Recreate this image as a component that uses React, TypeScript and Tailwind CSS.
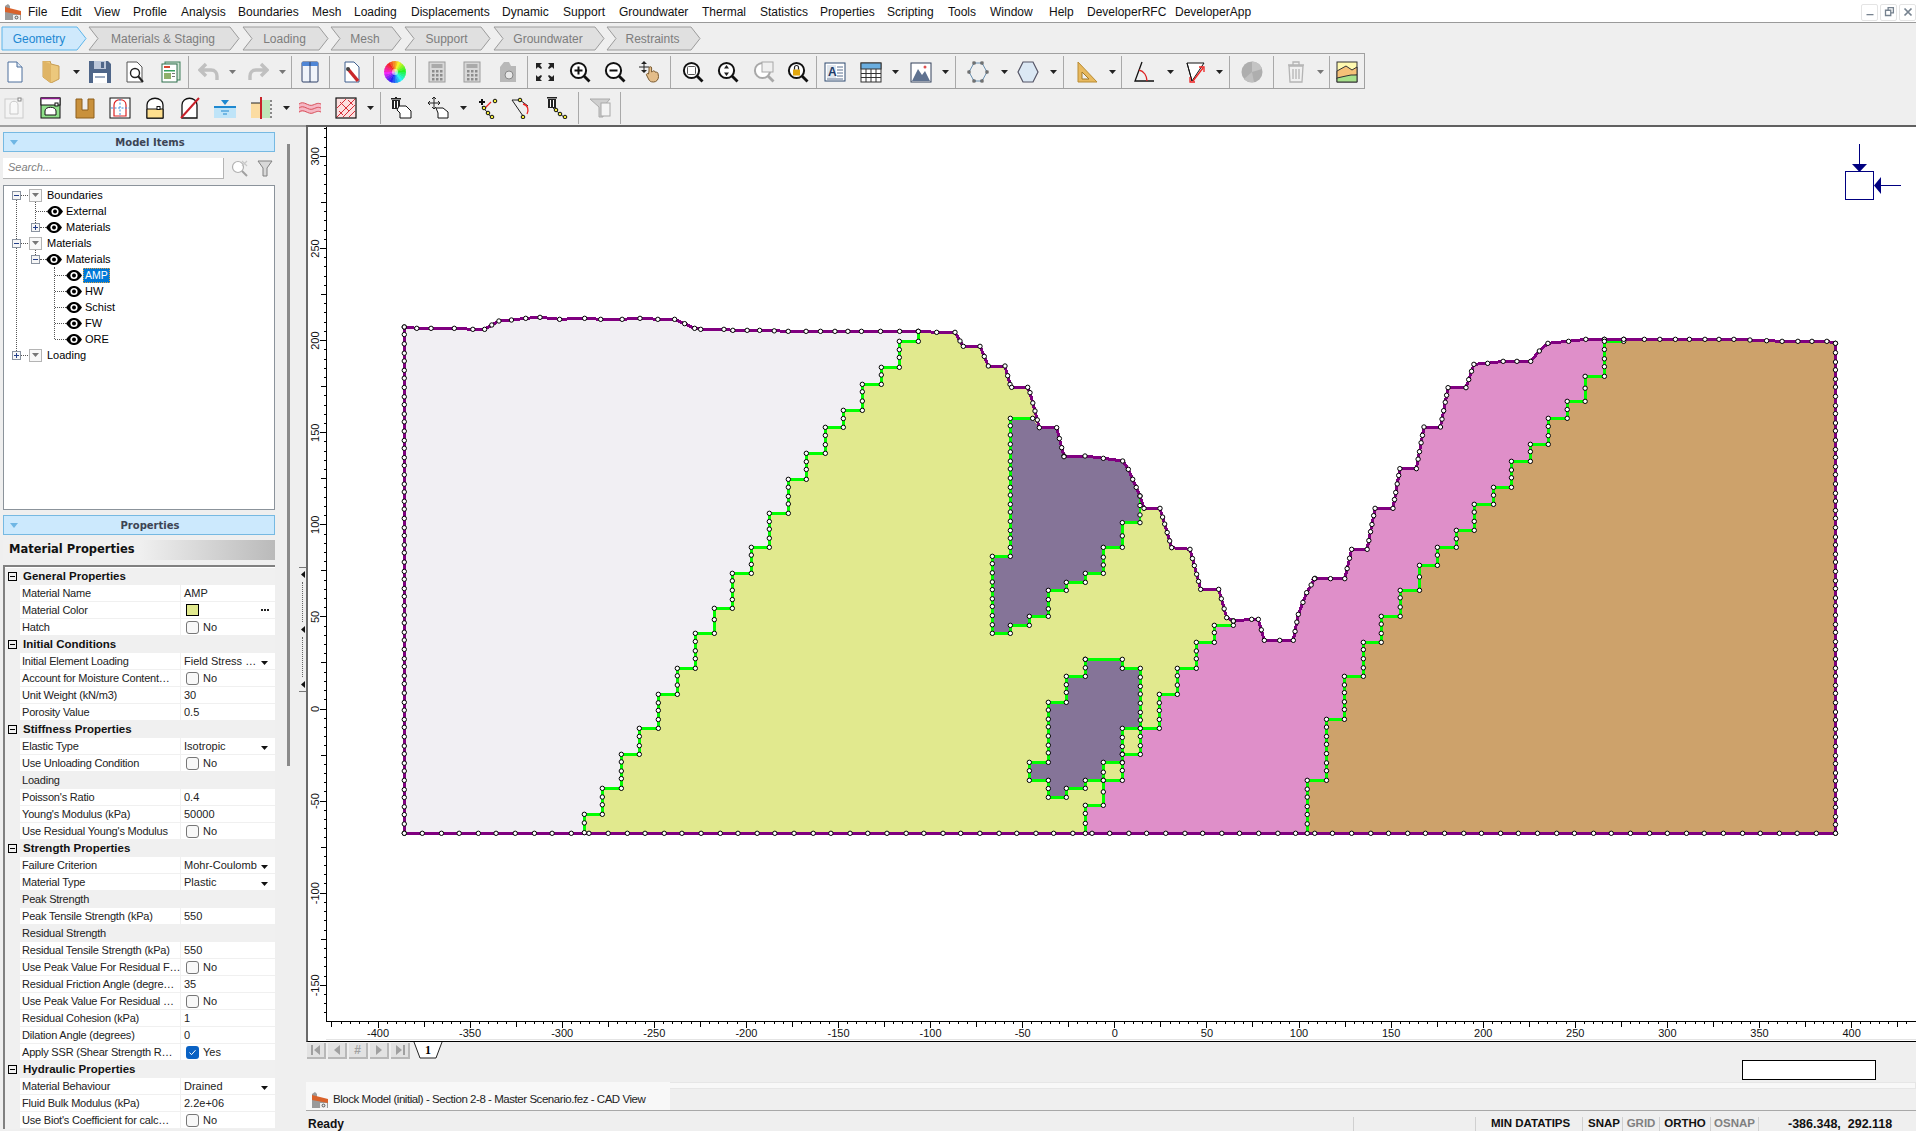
import React from "react";

type P = [number, number];
const z9 = (a: number[][]): P[] => a.map(([x, y]) => [390 + x / 2.8, 310 + y / 3]);
const z10 = (a: number[][]): P[] => a.map(([x, y]) => [940 + x / 3, 400 + y / 3]);
const z11 = (a: number[][]): P[] => a.map(([x, y]) => [1300 + x / 2.904, 325 + y / 3]);
const z12 = (a: number[][]): P[] => a.map(([x, y]) => [570 + x / 3, 320 + y / 3]);
const str = (a: P[]) => a.map(([x, y]) => `${x.toFixed(1)},${y.toFixed(1)}`).join(" ");

const sA = z9([[40,48],[75,52],[115,52],[180,52],[232,55],[265,55],[285,42],[305,30],[340,27],[380,22],[420,19],[475,25],[545,22],[590,25],[650,25],[700,22],[750,25],[797,25],[825,38],[853,52],[870,55],[935,55],[960,58],[1035,58],[1115,61],[1165,61],[1320,61],[1427,61]]);
const sB = z12([[1045,31],[1100,34],[1155,34],[1170,60],[1180,76],[1230,76],[1255,135],[1305,135],[1320,190],[1325,199],[1373,199],[1380,215],[1395,270],[1408,320],[1460,320],[1475,380],[1482,405]]);
const sC = z10([[372,167],[435,165],[490,172],[548,180],[565,205],[600,285],[612,322],[660,322],[695,440],[750,445],[782,565],[836,565],[860,650],[880,660]]);
const sD = z10([[880,660],[935,655],[955,655],[973,718],[1060,718],[1075,640],[1100,575],[1125,532]]);
const sE = z11([[42,758],[130,758],[150,670],[195,670],[218,547],[270,547],[290,428],[338,428],[360,303],[408,303],[430,185],[482,185],[505,115],[545,112],[590,106],[670,106],[695,75],[720,52],[780,46],[830,40],[884,40]]);
const sF = z11([[884,40],[940,40],[1000,40],[1260,40],[1400,46],[1530,46],[1555,52]]);
const bR: P = [1835.5, 832.3];
const bL: P = [404.3, 832.3];
const surface = [...sA, ...sB, ...sC, ...sD, ...sE, ...sF];
const outer: P[] = [...surface, bR, bL];

const i1 = z12([[43,1535],[43,1480],[97,1480],[97,1402],[154,1402],[154,1300],[208,1300],[208,1222],[265,1222],[265,1120],[322,1120],[322,1042],[376,1042],[376,937],[433,937],[433,862],[487,862],[487,757],[544,757],[544,679],[598,679],[598,577],[655,577],[655,475],[709,475],[709,397],[766,397],[766,319],[820,319],[820,268],[877,268],[877,190],[934,190],[934,139],[988,139],[988,61],[1045,61],[1045,31]]);
const grayPoly: P[] = [...sA, ...[...i1].reverse(), bL];
const ore1Line = z10([[600,285],[600,365],[547,365],[547,439],[490,439],[490,517],[436,517],[436,544],[379,544],[379,568],[325,568],[325,646],[268,646],[268,673],[211,673],[211,697],[157,697],[157,466],[211,466],[211,52],[278,52]]);
const ore1: P[] = [...ore1Line, ...z10([[295,78],[350,78],[372,167],[435,165],[490,172],[548,180],[565,205]])];
const ore2 = z10([[436,775],[547,775],[547,802],[601,802],[601,982],[547,982],[547,1084],[490,1084],[490,1138],[436,1138],[436,1162],[379,1162],[379,1189],[325,1189],[325,1138],[268,1138],[268,1084],[325,1084],[325,904],[379,904],[379,826],[436,826],[436,775]]);
const pinkLine = z10([[436,1297],[436,1213],[490,1213],[490,1138],[547,1138],[547,1060],[601,1060],[601,982],[658,982],[658,880],[712,880],[712,802],[769,802],[769,724],[823,724],[823,673],[880,673],[880,660]]);
const brownLine = z11([[21,1522],[21,1363],[77,1363],[77,1180],[129,1180],[129,1051],[184,1051],[184,949],[236,949],[236,871],[291,871],[291,793],[347,793],[347,718],[399,718],[399,664],[454,664],[454,613],[506,613],[506,535],[562,535],[562,484],[614,484],[614,406],[669,406],[669,355],[721,355],[721,277],[776,277],[776,226],[828,226],[828,151],[884,151],[884,46],[940,46],[940,40]]);
const pinkPoly: P[] = [...pinkLine, ...sD, ...sE, ...[...brownLine].reverse().slice(2)];
const brownPoly: P[] = [...brownLine, ...sF.slice(2), bR];

function dots(pts: P[], stepH: number, stepV: number): P[] {
  const out: P[] = [];
  for (let i = 0; i < pts.length; i++) {
    out.push(pts[i]);
    if (i === pts.length - 1) break;
    const [x0, y0] = pts[i], [x1, y1] = pts[i + 1];
    const dx = x1 - x0, dy = y1 - y0;
    const len = Math.hypot(dx, dy);
    const step = Math.abs(dx) > Math.abs(dy) ? stepH : stepV;
    if (step <= 0) continue;
    const n = Math.floor(len / step);
    for (let k = 1; k < n; k++) {
      const j = ((k * 7 + i * 3) % 5) * 0.3;
      out.push([x0 + (dx * k) / n + (dx / len) * j, y0 + (dy * k) / n + (dy / len) * j]);
    }
  }
  return out;
}
const allDots: P[] = [
  ...dots(surface, 13, 8),
  ...dots([surface[surface.length - 1], bR], 18, 8.6),
  ...dots([bR, bL], 18.4, 9),
  ...dots([bL, surface[0]], 18, 8.6),
  ...dots(i1, 0, 8.4),
  ...dots(ore1Line, 0, 8.4),
  ...dots(ore2, 0, 8.4),
  ...dots(pinkLine, 0, 8.4),
  ...dots(brownLine, 0, 8.4),
];

const fx = (u: number) => 1114.8 + 1.842 * u;
const fy = (u: number) => 708 - 1.842 * u;

function Canvas() {
  const xt: number[] = [], yt: number[] = [];
  for (let u = -425; u <= 435; u += 5) xt.push(u);
  for (let u = -165; u <= 315; u += 5) yt.push(u);
  const tick = (u: number) => (u % 50 === 0 ? 6 : u % 25 === 0 ? 5 : 2);
  return (
    <div className="h-[915px] w-[1610px] border-l-2 border-[#6a6a6a] border-b border-b-black bg-white">
      <svg viewBox="308 126 1608 914" className="block h-[914px] w-[1608px]">
        <g shapeRendering="crispEdges">
          <polygon points={str(outer)} fill="#e1e98e" />
          <polygon points={str(grayPoly)} fill="#f1eff3" />
          <polygon points={str(pinkPoly)} fill="#df8fc9" />
          <polygon points={str(brownPoly)} fill="#cda26b" />
          <polygon points={str(ore1)} fill="#857498" />
          <polygon points={str(ore2)} fill="#857498" />
          {[i1, ore1Line, ore2, pinkLine, brownLine].map((l, i) => (
            <polyline key={i} points={str(l)} fill="none" stroke="#00ff00" strokeWidth="2.8" />
          ))}
        </g>
        <polygon points={str(outer)} fill="none" stroke="#800080" strokeWidth="3" shapeRendering="crispEdges" />
        {allDots.map(([x, y], i) => (
          <circle key={i} cx={x} cy={y} r="2.200" fill="#fff" stroke="#000" strokeWidth="1" />
        ))}
        <g shapeRendering="crispEdges" stroke="#000" strokeWidth="1">
          <line x1="326.5" y1="126" x2="326.5" y2="1021" />
          <line x1="326" y1="1020.5" x2="1916" y2="1020.5" />
          <line x1="326" y1="1038.5" x2="1916" y2="1038.5" stroke="#e4e4e4" />
          {xt.map((u) => (
            <line key={u} x1={fx(u)} y1="1021" x2={fx(u)} y2={1021 + tick(u)} />
          ))}
          {yt.map((u) => (
            <line key={u} x1={326 - tick(u)} y1={fy(u)} x2="326" y2={fy(u)} />
          ))}
        </g>
        {[-400,-350,-300,-250,-200,-150,-100,-50,0,50,100,150,200,250,300,350,400].map((u) => (
          <text key={u} x={fx(u)} y="1036" fontSize="11" textAnchor="middle" fontFamily="'Liberation Sans',sans-serif" fill="#111">{u}</text>
        ))}
        {[300,250,200,150,100,50,0,-50,-100,-150].map((u) => (
          <text key={u} x="319" y={fy(u)} fontSize="11" textAnchor="middle" transform={`rotate(-90 319 ${fy(u)})`} fontFamily="'Liberation Sans',sans-serif" fill="#111">{u}</text>
        ))}
        <g stroke="#000080" strokeWidth="1.4" fill="none" shapeRendering="crispEdges">
          <rect x="1845.5" y="170.5" width="28" height="28" />
          <line x1="1859.5" y1="143" x2="1859.5" y2="165" />
          <line x1="1880" y1="184.5" x2="1901" y2="184.5" />
        </g>
        <polygon points="1852,163 1867,163 1859.5,171" fill="#000080" />
        <polygon points="1874,184.5 1881,176 1881,193" fill="#000080" />
      </svg>
    </div>
  );
}

function I({ c, children }: { c: string; children: React.ReactNode }) {
  return <svg viewBox="0 0 22 22" className={`h-[22px] w-[22px] shrink-0 ${c}`}>{children}</svg>;
}
function Arr({ c, gray }: { c: string; gray?: boolean }) {
  return (
    <svg viewBox="0 0 7 4" className={`h-[4px] w-[7px] shrink-0 ${c}`}>
      <polygon points="0,0 7,0 3.5,4" fill={gray ? "#777" : "#222"} />
    </svg>
  );
}
function Sep({ c }: { c: string }) {
  return <div className={`h-[32px] w-px shrink-0 bg-[#a9a9a9] ${c}`} />;
}
function Mag({ c, gray, children }: { c: string; gray?: boolean; children?: React.ReactNode }) {
  const k = gray ? "#a8a8a8" : "#111";
  return (
    <I c={c}>
      <circle cx="9.5" cy="9.5" r="7.6" fill="#fff" stroke={k} strokeWidth="2" />
      <line x1="15" y1="15" x2="20.5" y2="20.5" stroke={k} strokeWidth="2.8" />
      {children}
    </I>
  );
}
function Logo({ c }: { c: string }) {
  return (
    <svg viewBox="0 0 18 16" className={`h-[16px] w-[18px] shrink-0 ${c}`}>
      <polygon points="1,2 4,0 6,2 6,5 17,9 17,16 1,16" fill="#9a9a9a" />
      <polygon points="1,3 17,7 17,11 1,8" fill="#d9622b" />
      <rect x="9" y="11" width="7" height="5" fill="#eee" />
      <circle cx="12.5" cy="13.5" r="1.4" fill="none" stroke="#555" />
    </svg>
  );
}
function Calc({ c }: { c: string }) {
  const cells: React.ReactNode[] = [];
  for (let r = 0; r < 3; r++) for (let q = 0; q < 3; q++) cells.push(<rect key={`${r}${q}`} x={6 + q * 4} y={9 + r * 4} width="2.5" height="2.5" fill="#8c8c8c" />);
  return (
    <I c={c}>
      <rect x="3" y="1" width="16" height="20" fill="#d8d8d8" stroke="#9c9c9c" />
      <rect x="5.5" y="3" width="11" height="4" fill="#aaa" />
      {cells}
    </I>
  );
}
function Wheel({ c }: { c: string }) {
  const w: React.ReactNode[] = [];
  for (let i = 0; i < 24; i++) {
    const a0 = (i / 24) * Math.PI * 2, a1 = ((i + 1.2) / 24) * Math.PI * 2;
    w.push(<path key={i} d={`M11 11 L${11 + 11 * Math.sin(a0)} ${11 - 11 * Math.cos(a0)} L${11 + 11 * Math.sin(a1)} ${11 - 11 * Math.cos(a1)} Z`} fill={`hsl(${(i * 15 + 45) % 360} 90% 55%)`} />);
  }
  return <I c={c}>{w}<circle cx="11" cy="11" r="3" fill="#fff" opacity="0.5" /></I>;
}
const YD = ({ x, y }: { x: number; y: number }) => <circle cx={x} cy={y} r="1.8" fill="#f5ee3a" stroke="#111" strokeWidth="1" />;
const Tr = ({ x, y, k = "#222" }: { x: number; y: number; k?: string }) => (
  <g fill={k}><rect x={x} y={y + 2} width="8" height="9" /><rect x={x - 1} y={y} width="10" height="1.5" /><rect x={x + 3} y={y - 1} width="2" height="1" /><rect x={x + 2} y={y + 3} width="1" height="7" fill="#fff" /><rect x={x + 5} y={y + 3} width="1" height="7" fill="#fff" /></g>
);

function Toolbar1() {
  return (
    <div className="flex h-[35px] w-[1365px] items-center border-b border-r border-[#a0a0a0] pt-[2px]">
      <I c="ml-[4px]"><path d="M4 1h9l5 5v15H4z" fill="#fff" stroke="#4d6f9c" /><path d="M13 1v5h5" fill="#dbe6f3" stroke="#4d6f9c" /></I>
      <I c="ml-[14px]"><polygon points="3,0 10,0 11,3 19,5 19,18 11,22 3,16" fill="#ecc87c" stroke="#c79c52" /><polygon points="3,0 11,3 11,22 3,16" fill="#dfb465" /></I>
      <Arr c="ml-[11px]" />
      <I c="ml-[9px]"><path d="M0 0h19l3 3v19H0z" fill="#4f6689" /><rect x="5" y="0" width="12" height="8" fill="#bcc7da" /><rect x="12" y="1" width="3" height="6" fill="#4f6689" /><rect x="4" y="12" width="14" height="10" fill="#fff" /><rect x="6" y="15" width="10" height="2" fill="#9aa8be" /></I>
      <I c="ml-[13px]"><path d="M3 1h10l5 5v15H3z" fill="#fff" stroke="#555" /><circle cx="11" cy="12" r="4.5" fill="#fff" stroke="#222" strokeWidth="1.4" /><line x1="14" y1="15" x2="19" y2="21" stroke="#222" strokeWidth="2" /></I>
      <I c="ml-[14px]"><rect x="5" y="1" width="15" height="18" fill="#cfe3d4" stroke="#3e7f5a" /><rect x="2" y="3" width="15" height="18" fill="#fff" stroke="#2f6f4c" /><rect x="4" y="5" width="6" height="2" fill="#d8452f" /><rect x="4" y="9" width="11" height="1.5" fill="#39a060" /><rect x="4" y="12" width="7" height="6" fill="#8fb06a" /><rect x="12" y="12" width="3" height="1" fill="#777" /><rect x="12" y="15" width="3" height="1" fill="#777" /></I>
      <Sep c="ml-[6px]" />
      <I c="ml-[9px]"><path d="M8 3 2 9l6 6M3 9h10c4 0 6 3 6 6v4" fill="none" stroke="#c0c0c0" strokeWidth="3.4" /></I>
      <Arr c="ml-[9px]" gray />
      <I c="ml-[11px]"><path d="M14 3l6 6-6 6M19 9H9c-4 0-6 3-6 6v4" fill="none" stroke="#c0c0c0" strokeWidth="3.4" /></I>
      <Arr c="ml-[10px]" gray />
      <Sep c="ml-[5px]" />
      <I c="ml-[7px]"><rect x="3" y="1" width="16" height="20" rx="1" fill="#f0f4fa" stroke="#2c3e66" /><rect x="3" y="1" width="16" height="4" fill="#4f86d6" /><line x1="11" y1="1" x2="11" y2="21" stroke="#2c3e66" /></I>
      <Sep c="ml-[8px]" />
      <I c="ml-[11px]"><path d="M4 1h9l5 5v15H4z" fill="#fff" stroke="#3f5f8e" /><line x1="7" y1="8" x2="17" y2="20" stroke="#c9272a" strokeWidth="3.4" /><circle cx="7" cy="8" r="2" fill="#444" /></I>
      <Sep c="ml-[10px]" />
      <Wheel c="ml-[10px]" />
      <Sep c="ml-[9px]" />
      <Calc c="ml-[10px]" />
      <Calc c="ml-[13px]" />
      <I c="ml-[14px]"><path d="M3 6 7 1h5l2 4h5v16H3z" fill="#b8b8b8" /><circle cx="12" cy="14" r="4" fill="#e8e8e8" stroke="#888" /></I>
      <Sep c="ml-[8px]" />
      <I c="ml-[6px]"><g fill="#222"><polygon points="2,2 8,2 6,4 8,7 7,8 4,6 2,8" /><polygon points="20,2 14,2 16,4 14,7 15,8 18,6 20,8" /><polygon points="2,20 8,20 6,18 8,15 7,14 4,16 2,14" /><polygon points="20,20 14,20 16,18 14,15 15,14 18,16 20,14" /></g></I>
      <Mag c="ml-[13px]"><path d="M5.5 9.5h8M9.5 5.5v8" stroke="#111" strokeWidth="2" /></Mag>
      <Mag c="ml-[13px]"><path d="M5.5 9.5h8" stroke="#111" strokeWidth="2" /></Mag>
      <I c="ml-[13px]"><path d="M5 1v10M0 6h10" stroke="#222" /><path d="M2 3 5 0l3 3M2 9l3 3 3-3" fill="#222" /><path d="M10 10V7a1.300 1.300 0 0 1 2.600 0v4l1-.5a1.300 1.300 0 0 1 2.400.5l1 .2c1-.2 2 .4 2 1.300l.5 3c0 3-2 5.500-5 5.500s-4-1-5-3l-2-4c-.5-1 1-2 2-1z" fill="#e3bd8a" stroke="#7a5a30" /></I>
      <Sep c="ml-[9px]" />
      <Mag c="ml-[11px]"><rect x="5.500" y="5.500" width="8" height="8" rx="1" fill="#fff" stroke="#555" /></Mag>
      <Mag c="ml-[13px]"><path d="M9.500 4l2.500 3.500H7zM9.500 15 12 11.500H7z" fill="#222" /></Mag>
      <Mag c="ml-[14px]" gray><rect x="9" y="1" width="11" height="10" fill="#f0f0f0" stroke="#a8a8a8" /></Mag>
      <Mag c="ml-[12px]"><rect x="6" y="8.500" width="7" height="6" fill="#e2a80f" /><path d="M7.500 8.500V6.500a2 2 0 0 1 4 0v2" fill="none" stroke="#222" strokeWidth="1.200" /></Mag>
      <Sep c="ml-[7px]" />
      <I c="ml-[7px]"><rect x="1" y="2" width="20" height="18" fill="#fff" stroke="#2e4a70" /><rect x="3" y="4" width="9" height="13" fill="#dfe6ee" /><text x="4" y="15" fontSize="12" fontWeight="700" fontFamily="'Liberation Sans',sans-serif" fill="#1c3a68">A</text><path d="M13 6h6M13 9h6M13 12h6M13 15h6M3 18h16" stroke="#5a7090" /></I>
      <I c="ml-[14px]"><rect x="1" y="2" width="20" height="19" fill="#fff" stroke="#333" /><rect x="1" y="2" width="20" height="6" fill="#6aaee0" stroke="#333" /><path d="M1 12.500h20M1 16.500h20M6 8v13M11 8v13M16 8v13" stroke="#333" /></I>
      <Arr c="ml-[10px]" />
      <I c="ml-[11px]"><rect x="1" y="2" width="20" height="19" fill="#fff" stroke="#33405a" /><polygon points="2,20 8,8 12,14 15,10 20,20" fill="#5f7290" /><circle cx="15" cy="6" r="1.500" fill="#e05050" /></I>
      <Arr c="ml-[10px]" />
      <Sep c="ml-[6px]" />
      <I c="ml-[11px]"><polygon points="7,2 15,2 20,11 15,20 7,20 2,11" fill="none" stroke="#6a90b0" /><g fill="#fff" stroke="#222" strokeWidth="0.800"><rect x="6" y="1" width="2" height="2" /><rect x="14" y="1" width="2" height="2" /><rect x="19" y="10" width="2" height="2" /><rect x="14" y="19" width="2" height="2" /><rect x="6" y="19" width="2" height="2" /><rect x="1" y="10" width="2" height="2" /></g></I>
      <Arr c="ml-[12px]" />
      <I c="ml-[9px]"><polygon points="6,1 16,1 21,11 16,21 6,21 1,11" fill="#dbe8f4" stroke="#556" strokeWidth="1.200" /></I>
      <Arr c="ml-[11px]" />
      <Sep c="ml-[6px]" />
      <I c="ml-[12px]"><path d="M2 1l19 20H2z" fill="#e8b95e" stroke="#b98c34" /><path d="M6 11l7 7H6z" fill="#f0f0f0" stroke="#a07828" /></I>
      <Arr c="ml-[11px]" />
      <Sep c="ml-[5px]" />
      <I c="ml-[11px]"><path d="M9 1 2 20h19" fill="none" stroke="#111" strokeWidth="1.300" /><path d="M6 9c5 1 8 6 8 11" fill="none" stroke="#d22" strokeWidth="1.300" /></I>
      <Arr c="ml-[12px]" />
      <I c="ml-[10px]"><polygon points="3,2 20,2 8,20" fill="#fff" stroke="#111" /><path d="M3 2 8 20" stroke="#111" /><path d="M19 7 9 20" stroke="#e22" strokeWidth="1.300" /><path d="M15 6h5v5M6 16v5h5" fill="none" stroke="#e22" strokeWidth="1.300" /></I>
      <Arr c="ml-[10px]" />
      <Sep c="ml-[6px]" />
      <I c="ml-[11px]"><circle cx="11" cy="11" r="10.500" fill="#aeaeae" /><path d="M11 11 11 .5A10.500 10.500 0 0 1 21 8z" fill="#c4c4c4" /><path d="M11 11 3 18a10.500 10.500 0 0 0 10 3z" fill="#c0c0c0" /></I>
      <Sep c="ml-[10px]" />
      <I c="ml-[11px]"><path d="M4 5h14l-1 16H5z" fill="#f0f0f0" stroke="#b4b4b4" strokeWidth="1.300" /><path d="M3 4h16M8 4V1h6v3M8 8v10M11 8v10M14 8v10" fill="none" stroke="#b4b4b4" strokeWidth="1.300" /></I>
      <Arr c="ml-[10px]" gray />
      <Sep c="ml-[5px]" />
      <I c="ml-[6px]"><rect x="1" y="1" width="20" height="20" fill="#fff9b0" stroke="#333" /><path d="M1 10 10 5l6 4 5-3v8l-6 1-5 1-9 2z" fill="#f5c178" stroke="#333" /><path d="M1 17l9-2 5-1 6 0v7H1z" fill="#a6e08a" stroke="#333" /></I>
    </div>
  );
}

function Toolbar2() {
  return (
    <div className="flex h-[36px] w-[1365px] items-center pt-[2px]">
      <I c="ml-[3px]"><rect x="2" y="2" width="18" height="19" fill="#f4f4f4" stroke="#ccc" /><path d="M7 17V8c0-5 8-5 8 0v9z" fill="#f8f8f8" stroke="#c8c8c8" /><rect x="15" y="1" width="3" height="3" fill="#fff" stroke="#888" /></I>
      <I c="ml-[14px]"><rect x="2" y="1" width="19" height="20" fill="#8fe08a" stroke="#111" /><rect x="2" y="1" width="19" height="7" fill="#fff" stroke="#111" /><line x1="2" y1="1.500" x2="21" y2="1.500" stroke="#8b1a8b" strokeWidth="1.500" /><path d="M6 18v-4c0-5 11-5 11 0v4z" fill="#fff" stroke="#111" /><rect x="16" y="6" width="3" height="3" fill="#fff" stroke="#111" /></I>
      <I c="ml-[13px]"><path d="M2 2h6v11h6V2h6v19H2z" fill="#c9913c" stroke="#8d5e1c" /></I>
      <I c="ml-[13px]"><rect x="1" y="1" width="20" height="20" fill="#fff" stroke="#111" /><path d="M5 19V8c0-7 12-7 12 0v11z" fill="#fff" stroke="#d22" strokeWidth="1.200" /><path d="M2 11h18M11 2v18" stroke="#3c90e0" strokeDasharray="2 1.500" /></I>
      <I c="ml-[13px]"><path d="M3 21V8c0-9 16-9 16 0v13z" fill="#fff" stroke="#111" strokeWidth="1.300" /><path d="M3 12h16v9H3z" fill="#fedf8e" stroke="#111" /><rect x="13" y="9.500" width="3" height="3" fill="#fff" stroke="#111" /></I>
      <I c="ml-[13px]"><path d="M3 21V8c0-9 15-9 15 0v13z" fill="#fff" stroke="#111" strokeWidth="1.300" /><line x1="2" y1="21" x2="20" y2="1" stroke="#c8202a" strokeWidth="2" /></I>
      <I c="ml-[13px]"><rect x="0" y="9" width="22" height="2" fill="#1e88d0" /><polygon points="7,3 15,3 11,8" fill="#1e88d0" /><rect x="0" y="11" width="22" height="10" fill="#bfe4f8" /><path d="M7 14h8M9 17h4" stroke="#1e88d0" /></I>
      <I c="ml-[14px]"><rect x="1" y="6" width="10" height="15" fill="#fbdca2" /><rect x="11" y="3" width="9" height="18" fill="#bfe6b8" /><rect x="10" y="0" width="2" height="22" fill="#c8232a" /><path d="M20 4h2M20 8h2M20 12h2M20 16h2M20 20h2M1 6h9" stroke="#222" /></I>
      <Arr c="ml-[11px]" />
      <I c="ml-[9px]"><path d="M0 7c5-4 9 3 14 1s5-2 8-1v8c-3-1-5-1-8 1s-9-4-14 0z" fill="#f5b7c4" /><path d="M0 7c5-4 9 3 14 1s5-2 8-1M0 11c5-4 9 3 14 1s5-2 8-1M0 15c5-4 9 3 14 1s5-2 8-1" fill="none" stroke="#d8505a" /></I>
      <I c="ml-[14px]"><rect x="1" y="1" width="20" height="20" fill="#fde0e0" stroke="#111" strokeWidth="1.200" /><path d="M2 11 11 2M2 20 20 2M8 20 20 8M14 20l6-6M5 5l5 5M9 9l5 5M13 3l5 5M4 14l4 4" stroke="#d8303a" /></I>
      <Arr c="ml-[10px]" />
      <Sep c="ml-[6px]" />
      <I c="ml-[10px]"><Tr x={1} y={1} /><path d="M8 9h7l5 5v7H9v-5l-3-3z" fill="#fff" stroke="#111" /></I>
      <I c="ml-[14px]"><path d="M7 0v12M1 6h12" stroke="#222" /><path d="M5 2 7 0l2 2M5 10l2 2 2-2M3 4 1 6l2 2M11 4l2 2-2 2" fill="none" stroke="#222" /><path d="M9 11h7l5 4v6H11v-5z" fill="#fff" stroke="#111" /></I>
      <Arr c="ml-[11px]" />
      <I c="ml-[10px]"><path d="M2 5h6M5 2v6" stroke="#111" strokeWidth="2" /><path d="M5 9l9 11M5 9" stroke="#222" /><path d="M14 5 7 12" stroke="#e22" strokeWidth="1.200" /><YD x={7} y={11} /><YD x={11} y={16} /><YD x={15} y={20} /><YD x={18} y={4} /></I>
      <I c="ml-[12px]"><path d="M1 3l11 16V21M1 3h8l8 6" fill="none" stroke="#222" /><path d="M12 7c5 1 6 6 4 10" fill="none" stroke="#e22" strokeWidth="1.300" /><YD x={9} y={3} /><YD x={12} y={20} /></I>
      <I c="ml-[14px]"><Tr x={1} y={0} /><path d="M6 11l12 10" stroke="#222" /><YD x={9} y={13} /><YD x={13} y={17} /><YD x={18} y={20} /></I>
      <Sep c="ml-[9px]" />
      <I c="ml-[11px]"><path d="M0 2h20l-7 8v10h-4V10z" fill="#cfcfcf" stroke="#aaa" /><rect x="11" y="6" width="9" height="13" fill="#f4f4f4" stroke="#a8a8a8" /></I>
      <Sep c="ml-[8px]" />
    </div>
  );
}

const menu: [string, string][] = [
  ["File","w-[33px]"],["Edit","w-[33px]"],["View","w-[39px]"],["Profile","w-[48px]"],["Analysis","w-[57px]"],["Boundaries","w-[74px]"],["Mesh","w-[42px]"],["Loading","w-[57px]"],["Displacements","w-[91px]"],["Dynamic","w-[61px]"],["Support","w-[56px]"],["Groundwater","w-[83px]"],["Thermal","w-[58px]"],["Statistics","w-[60px]"],["Properties","w-[67px]"],["Scripting","w-[61px]"],["Tools","w-[42px]"],["Window","w-[59px]"],["Help","w-[38px]"],["DeveloperRFC","w-[88px]"],["DeveloperApp","w-[90px]"],
];

function Chev({ c, w, label, active }: { c: string; w: number; label: string; active?: boolean }) {
  return (
    <div className={`relative flex h-[25px] shrink-0 items-center justify-center pt-px text-[12px] ${c} ${active ? "pr-[10px] text-[#1d88d2]" : "pr-[2px] text-[#7d7d7d]"}`}>
      <svg viewBox={`0 0 ${w} 25`} className="absolute inset-0 h-full w-full">
        <polygon points={active ? `1,1 ${w - 10},1 ${w - 1},12.500 ${w - 10},24 1,24` : `1,1 ${w - 10},1 ${w - 1},12.500 ${w - 10},24 1,24 10,12.500`} fill={active ? "#cfe9fc" : "#e0e0e0"} stroke={active ? "#5db5ea" : "#9c9c9c"} />
      </svg>
      <span className="relative">{label}</span>
    </div>
  );
}

function Eye() {
  return (
    <svg viewBox="0 0 16 11" className="h-[11px] w-[16px] shrink-0">
      <path d="M0 5.500C3 1 5.500 0 8 0s5 1 8 5.500C13 10 10.500 11 8 11S3 10 0 5.500z" fill="#000" />
      <circle cx="8" cy="5.500" r="3.600" fill="#fff" />
      <circle cx="8" cy="5.500" r="2" fill="#000" />
    </svg>
  );
}
function Exp({ c, plus }: { c: string; plus?: boolean }) {
  return (
    <span className={`relative z-10 flex h-[9px] w-[9px] shrink-0 items-center justify-center border border-[#8a93a0] bg-[#f6f6f6] ${c}`}>
      <svg viewBox="0 0 7 7" className="h-[7px] w-[7px]"><path d={plus ? "M1 3.500h5M3.500 1v5" : "M1 3.500h5"} stroke="#24408a" strokeWidth="1" /></svg>
    </span>
  );
}
function Drop({ c }: { c: string }) {
  return (
    <span className={`relative z-10 flex h-[13px] w-[13px] shrink-0 items-center justify-center border border-[#b4b4b4] bg-[#f8f8f8] ${c}`}>
      <svg viewBox="0 0 7 4" className="h-[4px] w-[7px]"><polygon points="0,0 7,0 3.500,4" fill="#777" /></svg>
    </span>
  );
}

function Tree() {
  const row = "flex h-[16px] items-center";
  return (
    <div className="relative mt-[6px] h-[325px] w-[272px] border border-[#8b939b] bg-white pt-px text-[11px] text-black">
      <div className="absolute left-[12px] top-[13px] h-[156px] border-l border-dotted border-[#555]" />
      <div className="absolute left-[31px] top-[15px] h-[26px] border-l border-dotted border-[#555]" />
      <div className="absolute left-[31px] top-[63px] h-[10px] border-l border-dotted border-[#555]" />
      <div className="absolute left-[50px] top-[81px] h-[72px] border-l border-dotted border-[#555]" />
      <div className={row}><Exp c="ml-[8px]" /><span className="w-[7px] border-t border-dotted border-[#555]" /><Drop c="ml-[1px]" /><span className="ml-[5px]">Boundaries</span></div>
      <div className={row}><span className="ml-[32px] w-[11px] border-t border-dotted border-[#555]" /><Eye /><span className="ml-[3px]">External</span></div>
      <div className={row}><Exp c="ml-[27px]" plus /><span className="w-[6px] border-t border-dotted border-[#555]" /><Eye /><span className="ml-[4px]">Materials</span></div>
      <div className={row}><Exp c="ml-[8px]" /><span className="w-[7px] border-t border-dotted border-[#555]" /><Drop c="ml-[1px]" /><span className="ml-[5px]">Materials</span></div>
      <div className={row}><Exp c="ml-[27px]" /><span className="w-[6px] border-t border-dotted border-[#555]" /><Eye /><span className="ml-[4px]">Materials</span></div>
      <div className={row}><span className="ml-[51px] w-[11px] border-t border-dotted border-[#555]" /><Eye /><span className="ml-[1px] border border-dotted border-[#e0a040] bg-[#0078d7] px-px text-[10.500px] leading-[13px] text-white">AMP</span></div>
      {["HW", "Schist", "FW", "ORE"].map((t) => (
        <div key={t} className={row}><span className="ml-[51px] w-[11px] border-t border-dotted border-[#555]" /><Eye /><span className="ml-[3px]">{t}</span></div>
      ))}
      <div className={row}><Exp c="ml-[8px]" plus /><span className="w-[7px] border-t border-dotted border-[#555]" /><Drop c="ml-[1px]" /><span className="ml-[5px]">Loading</span></div>
    </div>
  );
}

type R = { k: "g" | "s" | "r"; t: string; v?: string; c?: "no" | "yes" | "color"; d?: boolean };
const rows: R[] = [
  { k: "g", t: "General Properties" },
  { k: "r", t: "Material Name", v: "AMP" },
  { k: "r", t: "Material Color", c: "color" },
  { k: "r", t: "Hatch", c: "no" },
  { k: "g", t: "Initial Conditions" },
  { k: "r", t: "Initial Element Loading", v: "Field Stress …", d: true },
  { k: "r", t: "Account for Moisture Content…", c: "no" },
  { k: "r", t: "Unit Weight (kN/m3)", v: "30" },
  { k: "r", t: "Porosity Value", v: "0.5" },
  { k: "g", t: "Stiffness Properties" },
  { k: "r", t: "Elastic Type", v: "Isotropic", d: true },
  { k: "r", t: "Use Unloading Condition", c: "no" },
  { k: "s", t: "Loading" },
  { k: "r", t: "Poisson's Ratio", v: "0.4" },
  { k: "r", t: "Young's Modulus (kPa)", v: "50000" },
  { k: "r", t: "Use Residual Young's Modulus", c: "no" },
  { k: "g", t: "Strength Properties" },
  { k: "r", t: "Failure Criterion", v: "Mohr-Coulomb", d: true },
  { k: "r", t: "Material Type", v: "Plastic", d: true },
  { k: "s", t: "Peak Strength" },
  { k: "r", t: "Peak Tensile Strength (kPa)", v: "550" },
  { k: "s", t: "Residual Strength" },
  { k: "r", t: "Residual Tensile Strength (kPa)", v: "550" },
  { k: "r", t: "Use Peak Value For Residual F…", c: "no" },
  { k: "r", t: "Residual Friction Angle (degre…", v: "35" },
  { k: "r", t: "Use Peak Value For Residual …", c: "no" },
  { k: "r", t: "Residual Cohesion (kPa)", v: "1" },
  { k: "r", t: "Dilation Angle (degrees)", v: "0" },
  { k: "r", t: "Apply SSR (Shear Strength R…", c: "yes" },
  { k: "g", t: "Hydraulic Properties" },
  { k: "r", t: "Material Behaviour", v: "Drained", d: true },
  { k: "r", t: "Fluid Bulk Modulus (kPa)", v: "2.2e+06" },
  { k: "r", t: "Use Biot's Coefficient for calc…", c: "no" },
];

function PropRow({ r }: { r: R }) {
  if (r.k === "g")
    return (
      <div className="flex h-[17px] items-center bg-[#f0f0f0]">
        <span className="ml-[3px] flex h-[9px] w-[9px] shrink-0 items-center justify-center border border-black">
          <span className="h-px w-[5px] bg-black" />
        </span>
        <span className="ml-[6px] whitespace-nowrap text-[11.500px] font-bold text-[#111]">{r.t}</span>
      </div>
    );
  if (r.k === "s")
    return (
      <div className="flex h-[17px] items-center bg-[#f0f0f0] pl-[17px] text-[11px] tracking-[-0.2px] text-[#222]">{r.t}</div>
    );
  return (
    <div className="flex h-[17px] border-b border-[#f0f0f0] text-[11px] text-[#222]">
      <div className="w-[15px] shrink-0 bg-[#f0f0f0]" />
      <div className="flex w-[161px] shrink-0 items-center overflow-hidden whitespace-nowrap border-r border-[#f0f0f0] pl-[2px] tracking-[-0.2px]">{r.t}</div>
      <div className="relative flex min-w-0 flex-1 items-center pl-[3px] whitespace-nowrap">
        {r.v && <span>{r.v}</span>}
        {r.c === "no" && (<><span className="ml-[2px] h-[13px] w-[13px] rounded-[3px] border border-[#777] bg-[#f8f8f8]" /><span className="ml-[4px]">No</span></>)}
        {r.c === "yes" && (
          <>
            <span className="ml-[2px] flex h-[13px] w-[13px] items-center justify-center rounded-[3px] bg-[#0a62c4]">
              <svg viewBox="0 0 9 9" className="h-[9px] w-[9px]"><path d="M1.500 4.500l2 2.200 4-4.500" fill="none" stroke="#fff" strokeWidth="1" /></svg>
            </span>
            <span className="ml-[4px]">Yes</span>
          </>
        )}
        {r.c === "color" && (
          <>
            <span className="ml-[2px] h-[12px] w-[13px] border border-black bg-[#e1e98e]" />
            <span className="absolute right-[6px] top-[7px] h-[2px] w-[8px] border-b-2 border-dotted border-[#222]" />
          </>
        )}
        {r.d && <svg viewBox="0 0 7 4" className="absolute right-[7px] top-[8px] h-[4px] w-[7px]"><polygon points="0,0 7,0 3.500,4" fill="#111" /></svg>}
      </div>
    </div>
  );
}

function Header({ label, c }: { label: string; c: string }) {
  return (
    <div className={`flex h-[20px] w-[272px] items-center border border-[#76b9e2] bg-[#cce9fd] ${c}`}>
      <svg viewBox="0 0 8 5" className="ml-[6px] h-[5px] w-[8px] shrink-0"><polygon points="0,0 8,0 4,5" fill="#6fb6e4" /></svg>
      <span className="flex-1 pl-[8px] text-center font-['DejaVu_Sans',sans-serif] text-[10px] font-bold text-[#3c4454]">{label}</span>
    </div>
  );
}

function LeftPanel() {
  return (
    <div className="flex h-full w-[306px] shrink-0 border-t-2 border-[#a0a0a0]">
      <div className="ml-[3px] flex w-[272px] shrink-0 flex-col">
        <Header label="Model Items" c="mt-[5px]" />
        <div className="mt-[6px] flex h-[21px] items-center">
          <div className="flex h-[21px] w-[221px] items-center border-b border-r border-[#b4b4b4] bg-white pb-[2px] pl-[5px] text-[11px] italic text-[#808080]">Search...</div>
          <svg viewBox="0 0 18 18" className="ml-[7px] h-[18px] w-[18px]"><circle cx="7" cy="7" r="5.500" fill="#fff" stroke="#b0b0b0" strokeWidth="1.200" /><line x1="11" y1="11" x2="16" y2="16" stroke="#a0a0a0" strokeWidth="2" /><path d="M11 1l5 5M16 1l-5 5" stroke="#c8c8c8" strokeWidth="1.200" /></svg>
          <svg viewBox="0 0 16 17" className="ml-[8px] h-[17px] w-[16px]"><path d="M1 1h14l-5 7v8H6V8z" fill="#d8d8d8" stroke="#808080" /></svg>
        </div>
        <Tree />
        <Header label="Properties" c="mt-[5px]" />
        <div className="mt-[5px] flex h-[20px] items-center bg-[linear-gradient(90deg,#f0f0f0_0%,#f0f0f0_50%,#bababa_100%)] pl-[6px] font-['DejaVu_Sans',sans-serif] text-[11.500px] font-bold text-[#111]">Material Properties</div>
        <div className="mt-[5px] h-[564px] overflow-hidden border-l-2 border-t-2 border-[#808080] bg-white pt-px">
          {rows.map((r, i) => <PropRow key={i} r={r} />)}
        </div>
      </div>
      <div className="ml-[12px] mt-[17px] h-[622px] w-[3px] shrink-0 bg-[#8a8a8a]" />
      <div className="ml-[9px] mt-[440px] flex h-[125px] w-[7px] shrink-0 flex-col items-center justify-between border-y border-[#777] py-[3px]">
        {[0, 1, 2].map((i) => (
          <React.Fragment key={i}>
            <svg viewBox="0 0 4 7" className="h-[7px] w-[4px]"><polygon points="4,0 4,7 0,3.500" fill="#111" /></svg>
            {i < 2 && <div className="h-[40px] w-0 border-l border-dotted border-[#666]" />}
          </React.Fragment>
        ))}
      </div>
    </div>
  );
}

function NavBtn({ d }: { d: string }) {
  return (
    <div className="mr-[2px] flex h-[16px] w-[19px] items-center justify-center border-b-2 border-r-2 border-[#b8b8b8] bg-[#e2e2e2]">
      <svg viewBox="0 0 10 10" className="h-[10px] w-[10px]"><path d={d} fill="#a0a0a0" /></svg>
    </div>
  );
}

function Right() {
  return (
    <div className="flex min-w-0 flex-1 flex-col border-t-2 border-[#606060]">
      <Canvas />
      <div className="flex h-[40px] w-[1610px] items-start">
        <div className="ml-[1px] flex pt-[1px]">
          <NavBtn d="M0 0h2v10H0zM9 0v10L3 5z" />
          <NavBtn d="M8 0v10L2 5z" />
          <div className="mr-[2px] flex h-[16px] w-[19px] items-center justify-center border-b-2 border-r-2 border-[#b8b8b8] bg-[#e2e2e2] font-bold text-[12px] leading-none text-[#a0a0a0]">#</div>
          <NavBtn d="M2 0v10l6-5z" />
          <NavBtn d="M1 0v10l6-5zM8 0h2v10H8z" />
        </div>
        <svg viewBox="0 0 30 17" className="ml-[1px] h-[17px] w-[30px] shrink-0">
          <polygon points="1,0 29,0 23,16 7,16" fill="#fff" />
          <polyline points="1,0 7,16 23,16 29,0" fill="none" stroke="#222" />
          <text x="15" y="12" fontSize="12" fontWeight="700" textAnchor="middle" fontFamily="'Liberation Serif',serif" fill="#000">1</text>
        </svg>
        <div className="ml-[1299px] mt-[18px] h-[20px] w-[134px] shrink-0 border border-black bg-white" />
      </div>
      <div className="h-[29px] w-[1610px] border-b border-[#a8a8a8] bg-[#efefef]">
        <div className="relative h-[7px] border border-[#e6e6e6] bg-[#f8f8f8]" />
        <div className="relative -mt-[7px] flex h-[28px] w-[364px] items-center bg-[#f8f8f8] pl-[5px] pt-[8px] text-[11.500px] text-[#222]">
          <Logo c="" />
          <span className="ml-[4px] whitespace-nowrap tracking-[-0.45px]">Block Model (initial) - Section 2-8 - Master Scenario.fez - CAD View</span>
        </div>
      </div>
      <div className="flex h-[20px] items-center pt-[6px] text-[12px] font-bold text-[#111]">
        <div className="flex h-[14px] w-[1048px] shrink-0 items-center border-r border-[#d0d0d0] pl-[2px]">Ready</div>
        <div className="h-[14px] w-[122px] shrink-0 border-r border-[#d0d0d0]" />
        <div className="flex h-[14px] w-[107px] shrink-0 items-center whitespace-nowrap border-r border-[#d0d0d0] pl-[15px] text-[11.500px]">MIN DATATIPS</div>
        <div className="flex h-[14px] w-[40px] shrink-0 items-center justify-center border-r border-[#d0d0d0] pl-[3px] text-[11.500px]">SNAP</div>
        <div className="flex h-[14px] w-[37px] shrink-0 items-center justify-center border-r border-[#d0d0d0] text-[11.500px] text-[#808080]">GRID</div>
        <div className="flex h-[14px] w-[51px] shrink-0 items-center justify-center border-r border-[#d0d0d0] text-[11.500px]">ORTHO</div>
        <div className="flex h-[14px] w-[48px] shrink-0 items-center justify-center border-r border-[#d0d0d0] text-[11.500px] text-[#808080]">OSNAP</div>
        <div className="whitespace-pre pl-[29px] text-[12.500px]">-386.348,  292.118</div>
      </div>
    </div>
  );
}

export default function App() {
  return (
    <div className="flex h-[1131px] w-[1916px] flex-col overflow-hidden bg-[#efefef] font-['Liberation_Sans',sans-serif]">
      <div className="flex h-[23px] shrink-0 items-center border-b border-[#9a9a9a] bg-white pt-[2px] text-[12px] text-[#111]">
        <Logo c="ml-[4px] mr-[6px]" />
        {menu.map(([t, w]) => <span key={t} className={`shrink-0 ${w}`}>{t}</span>)}
        <div className="ml-auto flex gap-[2px]">
          {["M4 11h8", "M4 6h6v6H4zM7 6V3h6v6h-3", "M4 4l8 8M12 4l-8 8"].map((d, i) => (
            <span key={i} className="flex h-[17px] w-[17px] items-center justify-center rounded-[2px] border border-[#e4e4e4] bg-white">
              <svg viewBox="0 0 16 16" className="h-[14px] w-[14px]"><path d={d} fill="none" stroke="#76828f" strokeWidth={i === 2 ? 2 : 1.500} /></svg>
            </span>
          ))}
        </div>
      </div>
      <div className="flex h-[31px] w-[1365px] shrink-0 items-center border-b border-[#a0a0a0] pl-[1px]">
        <Chev c="w-[86px]" w={86} label="Geometry" active />
        <Chev c="ml-[1px] w-[152px]" w={152} label="Materials & Staging" />
        <Chev c="ml-[2px] w-[87px]" w={87} label="Loading" />
        <Chev c="ml-[1px] w-[72px]" w={72} label="Mesh" />
        <Chev c="ml-[2px] w-[87px]" w={87} label="Support" />
        <Chev c="ml-[2px] w-[112px]" w={112} label="Groundwater" />
        <Chev c="ml-[1px] w-[95px]" w={95} label="Restraints" />
      </div>
      <Toolbar1 />
      <Toolbar2 />
      <div className="flex min-h-0 flex-1">
        <LeftPanel />
        <Right />
      </div>
    </div>
  );
}
